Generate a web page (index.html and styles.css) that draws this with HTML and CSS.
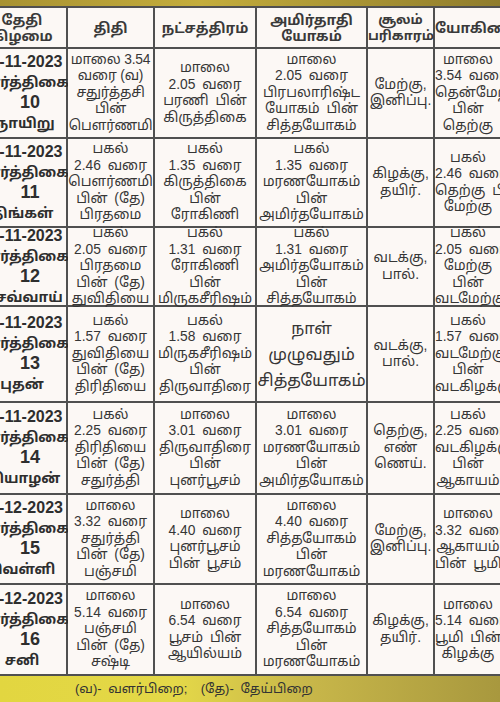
FILE: index.html
```html
<!DOCTYPE html>
<html lang="ta">
<head>
<meta charset="utf-8">
<title>பஞ்சாங்கம்</title>
<link rel="stylesheet" href="styles.css">
</head>
<body>
<div class="sheet">
  <div class="topband"></div>
  <div class="grid">
    <div class="cell head c1">தேதி<br>கிழமை</div>
    <div class="cell head">திதி</div>
    <div class="cell head">நட்சத்திரம்</div>
    <div class="cell head">அமிர்தாதி<br>யோகம்</div>
    <div class="cell head small">சூலம்<br>பரிகாரம்</div>
    <div class="cell head last">யோகினி</div>

    <div class="cell date"><span class="d">26-11-2023</span><span class="m">கார்த்திகை</span><span class="n">10</span><span class="w">ஞாயிறு</span></div>
    <div class="cell tight">மாலை 3.54<br>வரை (வ)<br>சதுர்த்தசி<br>பின்<br>பௌர்ணமி</div>
    <div class="cell">மாலை<br>2.05 வரை<br>பரணி பின்<br>கிருத்திகை</div>
    <div class="cell">மாலை<br>2.05 வரை<br>பிரபலாரிஷ்ட<br>யோகம் பின்<br>சித்தயோகம்</div>
    <div class="cell">மேற்கு,<br>இனிப்பு.</div>
    <div class="cell last">மாலை<br>3.54 வரை<br>தென்மேற்கு<br>பின்<br>தெற்கு</div>

    <div class="cell date"><span class="d">27-11-2023</span><span class="m">கார்த்திகை</span><span class="n">11</span><span class="w">திங்கள்</span></div>
    <div class="cell">பகல்<br>2.46 வரை<br>பௌர்ணமி<br>பின் (தே)<br>பிரதமை</div>
    <div class="cell">பகல்<br>1.35 வரை<br>கிருத்திகை<br>பின்<br>ரோகிணி</div>
    <div class="cell">பகல்<br>1.35 வரை<br>மரணயோகம்<br>பின்<br>அமிர்தயோகம்</div>
    <div class="cell">கிழக்கு,<br>தயிர்.</div>
    <div class="cell last">பகல்<br>2.46 வரை<br>தெற்கு பின்<br>மேற்கு</div>

    <div class="cell date"><span class="d">28-11-2023</span><span class="m">கார்த்திகை</span><span class="n">12</span><span class="w">செவ்வாய்</span></div>
    <div class="cell">பகல்<br>2.05 வரை<br>பிரதமை<br>பின் (தே)<br>துவிதியை</div>
    <div class="cell">பகல்<br>1.31 வரை<br>ரோகிணி<br>பின்<br>மிருகசீரிஷம்</div>
    <div class="cell">பகல்<br>1.31 வரை<br>அமிர்தயோகம்<br>பின்<br>சித்தயோகம்</div>
    <div class="cell">வடக்கு,<br>பால்.</div>
    <div class="cell last">பகல்<br>2.05 வரை<br>மேற்கு<br>பின்<br>வடமேற்கு</div>

    <div class="cell date"><span class="d">29-11-2023</span><span class="m">கார்த்திகை</span><span class="n">13</span><span class="w">புதன்</span></div>
    <div class="cell">பகல்<br>1.57 வரை<br>துவிதியை<br>பின் (தே)<br>திரிதியை</div>
    <div class="cell">பகல்<br>1.58 வரை<br>மிருகசீரிஷம்<br>பின்<br>திருவாதிரை</div>
    <div class="cell big">நாள்<br>முழுவதும்<br>சித்தயோகம்</div>
    <div class="cell">வடக்கு,<br>பால்.</div>
    <div class="cell last">பகல்<br>1.57 வரை<br>வடமேற்கு<br>பின்<br>வடகிழக்கு</div>

    <div class="cell date"><span class="d">30-11-2023</span><span class="m">கார்த்திகை</span><span class="n">14</span><span class="w">வியாழன்</span></div>
    <div class="cell">பகல்<br>2.25 வரை<br>திரிதியை<br>பின் (தே)<br>சதுர்த்தி</div>
    <div class="cell">மாலை<br>3.01 வரை<br>திருவாதிரை<br>பின்<br>புனர்பூசம்</div>
    <div class="cell">மாலை<br>3.01 வரை<br>மரணயோகம்<br>பின்<br>அமிர்தயோகம்</div>
    <div class="cell">தெற்கு,<br>எண்<br>ணெய்.</div>
    <div class="cell last">பகல்<br>2.25 வரை<br>வடகிழக்கு<br>பின்<br>ஆகாயம்</div>

    <div class="cell date"><span class="d">01-12-2023</span><span class="m">கார்த்திகை</span><span class="n">15</span><span class="w">வெள்ளி</span></div>
    <div class="cell">மாலை<br>3.32 வரை<br>சதுர்த்தி<br>பின் (தே)<br>பஞ்சமி</div>
    <div class="cell">மாலை<br>4.40 வரை<br>புனர்பூசம்<br>பின் பூசம்</div>
    <div class="cell">மாலை<br>4.40 வரை<br>சித்தயோகம்<br>பின்<br>மரணயோகம்</div>
    <div class="cell">மேற்கு,<br>இனிப்பு.</div>
    <div class="cell last">மாலை<br>3.32 வரை<br>ஆகாயம்<br>பின் பூமி</div>

    <div class="cell date"><span class="d">02-12-2023</span><span class="m">கார்த்திகை</span><span class="n">16</span><span class="w">சனி</span></div>
    <div class="cell">மாலை<br>5.14 வரை<br>பஞ்சமி<br>பின் (தே)<br>சஷ்டி</div>
    <div class="cell">மாலை<br>6.54 வரை<br>பூசம் பின்<br>ஆயில்யம்</div>
    <div class="cell">மாலை<br>6.54 வரை<br>சித்தயோகம்<br>பின்<br>மரணயோகம்</div>
    <div class="cell">கிழக்கு,<br>தயிர்.</div>
    <div class="cell last">மாலை<br>5.14 வரை<br>பூமி பின்<br>கிழக்கு</div>
  </div>
  <div class="footer">(வ)- வளர்பிறை;&nbsp;&nbsp;(தே)- தேய்பிறை</div>
</div>
</body>
</html>
```
FILE: styles.css
```css
html, body {
  margin: 0;
  padding: 0;
  background: #fff;
}
.sheet {
  width: 500px;
  height: 702px;
  overflow: hidden;
  background: #d8c64a;
  font-family: "Liberation Sans", "Noto Sans Tamil", "Noto Sans Tamil UI", "Lohit Tamil", sans-serif;
  color: #333;
}
.topband {
  height: 6px;
  background: linear-gradient(90deg, #a89232 0%, #c4ad3c 40%, #8f7c2c 100%);
}
.grid {
  display: grid;
  grid-template-columns: 88px 85px 100px 109px 65px 95px;
  grid-template-rows: 39px 88px 87px 77px 94px 90px 88px 89px;
  gap: 2px;
  padding: 2px 0;
  margin-left: -22px;
  width: 560px;
  background: #505050;
}
.cell {
  background: #fcf8f5;
  display: flex;
  flex-direction: column;
  justify-content: center;
  align-items: stretch;
  text-align: center;
  white-space: nowrap;
  font-size: 13.8px;
  line-height: 16.5px;
  word-spacing: 3px;
  color: #363636;
}
.cell.tight {
  word-spacing: 0;
  letter-spacing: -0.2px;
}
.cell.last {
  padding-right: 29px;
}
.head {
  font-weight: 700;
  font-size: 14px;
  line-height: 16px;
  word-spacing: 0;
  color: #3a3a3a;
}
.head.small {
  font-size: 13px;
  line-height: 16px;
}
.big {
  font-size: 16.5px;
  line-height: 26px;
  word-spacing: 0;
}
.date {
  font-weight: 700;
  color: #2e2e2e;
  word-spacing: 0;
}
.date span {
  display: block;
}
.date .d {
  font-size: 16px;
  line-height: 20px;
}
.date .m {
  font-size: 14px;
  line-height: 20px;
  letter-spacing: -0.3px;
}
.date .n {
  font-size: 18px;
  line-height: 21px;
  padding-left: 16px;
}
.date .w {
  font-size: 14px;
  line-height: 21px;
}
.footer {
  height: 26px;
  background: linear-gradient(90deg, #e2d640 0%, #e4d848 35%, #c9b84a 60%, #a8983e 100%);
  font-size: 13px;
  line-height: 26px;
  word-spacing: 3px;
  padding-left: 75px;
  color: #333;
}
```
